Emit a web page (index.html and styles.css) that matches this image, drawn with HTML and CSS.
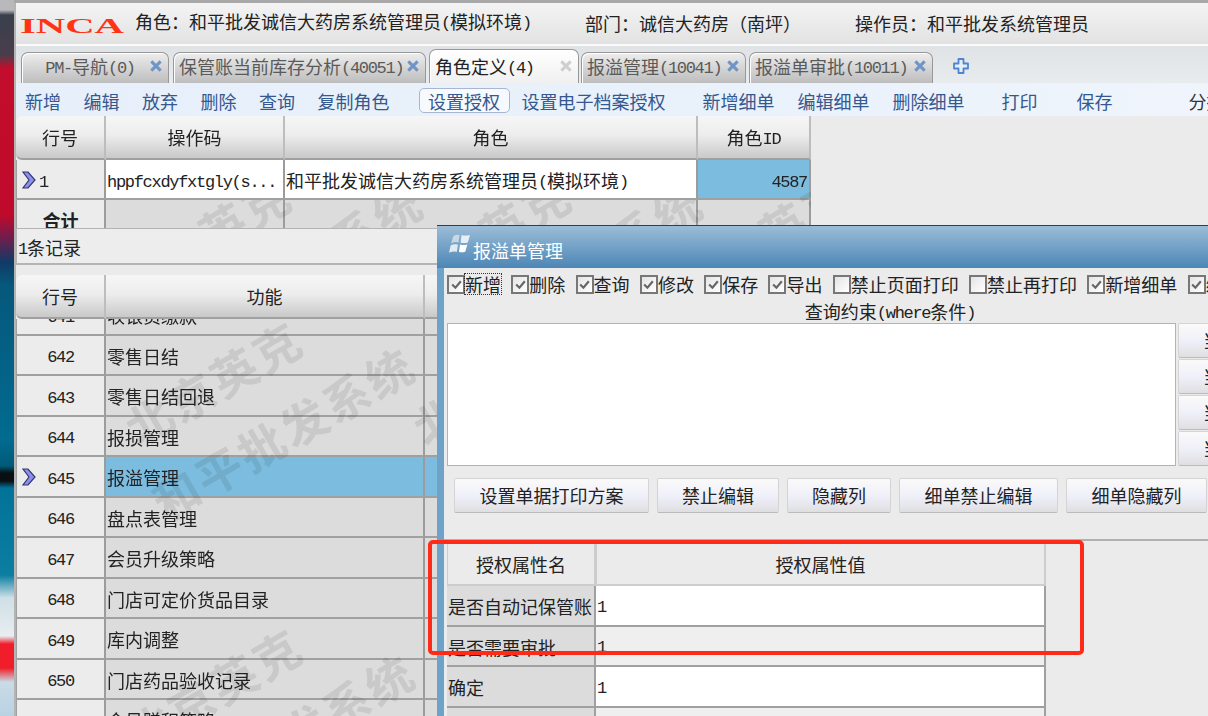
FILE: index.html
```html
<!DOCTYPE html>
<html lang="zh-CN">
<head>
<meta charset="utf-8">
<title>INCA 角色定义</title>
<link rel="stylesheet" href="styles.css">
</head>
<body>
<div class="screen">
  <div class="wall"></div>
  <div class="app">
    <div class="topline"></div>
    <header class="head">
      <div class="logo"><span>INCA</span></div>
      <div class="info info-role">角色<span class="fw">&#xFF1A;</span>和平批发诚信大药房系统管理员<span class="lat">(</span>模拟环境<span class="lat">)</span></div>
      <div class="info info-dept">部门<span class="fw">&#xFF1A;</span>诚信大药房&#xFF08;南坪&#xFF09;</div>
      <div class="info">操作员<span class="fw">&#xFF1A;</span>和平批发系统管理员</div>
    </header>
    <nav class="tabs">
      <div class="tab w1"><span class="tab-label center"><span class="lat">PM-</span>导航<span class="lat">(0)</span></span><svg class="x" viewBox="0 0 12 12"><path d="M2 2l8 8M10 2l-8 8"/></svg></div>
      <div class="tab w2"><span class="tab-label">保管账当前库存分析<span class="lat">(40051)</span></span><svg class="x" viewBox="0 0 12 12"><path d="M2 2l8 8M10 2l-8 8"/></svg></div>
      <div class="tab w3 active"><span class="tab-label">角色定义<span class="lat">(4)</span></span><svg class="x dim" viewBox="0 0 12 12"><path d="M2 2l8 8M10 2l-8 8"/></svg></div>
      <div class="tab w4"><span class="tab-label">报溢管理<span class="lat">(10041)</span></span><svg class="x" viewBox="0 0 12 12"><path d="M2 2l8 8M10 2l-8 8"/></svg></div>
      <div class="tab w5"><span class="tab-label">报溢单审批<span class="lat">(10011)</span></span><svg class="x" viewBox="0 0 12 12"><path d="M2 2l8 8M10 2l-8 8"/></svg></div>
      <svg class="plus" viewBox="0 0 18 18"><path d="M6.5 2h5v4.500h4.500v5h-4.500v4.500h-5v-4.500h-4.500v-5h4.500z" fill="#e6eef9" stroke="#4d86cf" stroke-width="1.800" stroke-linejoin="round"/></svg>
    </nav>
    <div class="toolbar">
      <span class="tool t1">新增</span><span class="tool t1">编辑</span><span class="tool t1">放弃</span><span class="tool t1">删除</span><span class="tool t1">查询</span><span class="tool t2">复制角色</span>
      <span class="tool pill">设置授权</span><span class="tool t3">设置电子档案授权</span>
      <span class="tool t4">新增细单</span><span class="tool t5">编辑细单</span><span class="tool t6">删除细单</span>
      <span class="tool t7">打印</span><span class="tool t8">保存</span><span class="tool t9">分摊</span>
    </div>

    <section class="grid1">
      <div class="hrow">
        <div class="hc c1">行号</div><div class="hc c2">操作码</div><div class="hc c3">角色</div><div class="hc c4"><span>角色<span class="lat">ID</span></span></div>
      </div>
      <div class="g1body">
        <div class="g1row">
          <div class="rh c1"><svg class="arrow" viewBox="0 0 14 18"><path d="M1 1l5 0 7 8-7 8-5 0 6-8z" fill="#8f8ff0" stroke="#33386a" stroke-width="1.2"/></svg><span class="lat">1</span></div>
          <div class="td white c2"><span class="lat">hppfcxdyfxtgly(s...</span></div>
          <div class="td white c3">和平批发诚信大药房系统管理员<span class="lat">(</span>模拟环境<span class="lat">)</span></div>
          <div class="td sel c4 num"><span class="lat">4587</span></div>
        </div>
        <div class="g1row total">
          <div class="rh c1 bold">合计</div><div class="td c2"></div><div class="td c3"></div><div class="td c4"></div>
        </div>
        <span class="wm wm-a1">北京英克</span><span class="wm wm-a2">和平批发系统</span>
        <span class="wm wm-a3">北京英克</span><span class="wm wm-a4">和平批发系统</span>
        <span class="wm wm-a5">北京英克</span>
      </div>
    </section>

    <div class="status"><span class="lat">1</span>条记录</div>

    <section class="grid2">
      <div class="hrow">
        <div class="hc c1">行号</div><div class="hc g2c2">功能</div><div class="hc g2c3"></div>
      </div>
      <div class="g2body">
        <div class="g2row first"><div class="rh c1"><span class="lat">641</span></div><div class="td g2c2">收银员缴款</div><div class="td g2c3"></div></div>
        <div class="g2row"><div class="rh c1"><span class="lat">642</span></div><div class="td g2c2">零售日结</div><div class="td g2c3"></div></div>
        <div class="g2row"><div class="rh c1"><span class="lat">643</span></div><div class="td g2c2">零售日结回退</div><div class="td g2c3"></div></div>
        <div class="g2row"><div class="rh c1"><span class="lat">644</span></div><div class="td g2c2">报损管理</div><div class="td g2c3"></div></div>
        <div class="g2row"><div class="rh c1"><svg class="arrow" viewBox="0 0 14 18"><path d="M1 1l5 0 7 8-7 8-5 0 6-8z" fill="#8f8ff0" stroke="#33386a" stroke-width="1.2"/></svg><span class="lat">645</span></div><div class="td sel g2c2">报溢管理</div><div class="td sel g2c3"></div></div>
        <div class="g2row"><div class="rh c1"><span class="lat">646</span></div><div class="td g2c2">盘点表管理</div><div class="td g2c3"></div></div>
        <div class="g2row"><div class="rh c1"><span class="lat">647</span></div><div class="td g2c2">会员升级策略</div><div class="td g2c3"></div></div>
        <div class="g2row"><div class="rh c1"><span class="lat">648</span></div><div class="td g2c2">门店可定价货品目录</div><div class="td g2c3"></div></div>
        <div class="g2row"><div class="rh c1"><span class="lat">649</span></div><div class="td g2c2">库内调整</div><div class="td g2c3"></div></div>
        <div class="g2row"><div class="rh c1"><span class="lat">650</span></div><div class="td g2c2">门店药品验收记录</div><div class="td g2c3"></div></div>
        <div class="g2row"><div class="rh c1"><span class="lat">651</span></div><div class="td g2c2">会员赠积策略</div><div class="td g2c3"></div></div>
        <span class="wm wm-b1">北京英克</span><span class="wm wm-b2">和平批发系统</span>
        <span class="wm wm-b3">北京英克</span><span class="wm wm-b4">和平批发系统</span>
        <span class="wm wm-b5">北京英克</span>
      </div>
    </section>
  </div>

  <div class="dialog">
    <div class="titlebar">
      <svg class="flag" viewBox="0 0 22 20"><path d="M5 2q3-2 6-1l-1 7q-3-1-7 1z" fill="#c4d8e8"/><path d="M13 1q3 1 8 0l-2 7q-4 1-7 0z" fill="#e6eff6"/><path d="M2.500 11q3-2 7-1l-1 7q-4-1-7.500 1z" fill="#e0ebf3"/><path d="M11.500 10q3 1 7 0l-2 7q-4 1-6 0z" fill="#ffffff"/></svg>
      <span class="dlg-title">报溢单管理</span>
    </div>
    <div class="dlg-body">
      <div class="checks">
        <label class="chk"><span class="box on"><svg viewBox="0 0 12 12"><path d="M2 6l3 3 5-6"/></svg></span><span class="focus">新增</span></label>
        <label class="chk"><span class="box on"><svg viewBox="0 0 12 12"><path d="M2 6l3 3 5-6"/></svg></span>删除</label>
        <label class="chk"><span class="box on"><svg viewBox="0 0 12 12"><path d="M2 6l3 3 5-6"/></svg></span>查询</label>
        <label class="chk"><span class="box on"><svg viewBox="0 0 12 12"><path d="M2 6l3 3 5-6"/></svg></span>修改</label>
        <label class="chk"><span class="box on"><svg viewBox="0 0 12 12"><path d="M2 6l3 3 5-6"/></svg></span>保存</label>
        <label class="chk"><span class="box on"><svg viewBox="0 0 12 12"><path d="M2 6l3 3 5-6"/></svg></span>导出</label>
        <label class="chk"><span class="box"></span>禁止页面打印</label>
        <label class="chk"><span class="box"></span>禁止再打印</label>
        <label class="chk"><span class="box on"><svg viewBox="0 0 12 12"><path d="M2 6l3 3 5-6"/></svg></span>新增细单</label>
        <label class="chk"><span class="box on"><svg viewBox="0 0 12 12"><path d="M2 6l3 3 5-6"/></svg></span>编辑细单</label>
      </div>
      <div class="q-label">查询约束<span class="lat">(where</span>条件<span class="lat">)</span></div>
      <div class="q-row">
        <div class="q-area"></div>
        <div class="q-btns">
          <div class="btn qb">当</div><div class="btn qb">当</div><div class="btn qb">当</div><div class="btn qb">当</div>
        </div>
      </div>
      <div class="btn-row">
        <div class="btn b1">设置单据打印方案</div><div class="btn b2">禁止编辑</div><div class="btn b3">隐藏列</div><div class="btn b4">细单禁止编辑</div><div class="btn b5">细单隐藏列</div>
      </div>
      <div class="divider"></div>
      <div class="attr">
        <div class="attr-head"><div class="ah a1">授权属性名</div><div class="ah a2">授权属性值</div></div>
        <div class="attr-row"><div class="an">是否自动记保管账</div><div class="av white"><span class="lat">1</span></div></div>
        <div class="attr-row"><div class="an">是否需要审批</div><div class="av"><span class="lat">1</span></div></div>
        <div class="attr-row"><div class="an">确定</div><div class="av white"><span class="lat">1</span></div></div>
        <div class="attr-row"><div class="an"></div><div class="av"></div></div>
      </div>
    </div>
  </div>

  <div class="redbox"></div>
</div>
</body>
</html>
```
FILE: styles.css
```css
* { box-sizing: border-box; }
html, body { margin: 0; padding: 0; }
body { width: 1208px; height: 716px; overflow: hidden; font-family: "Noto Sans CJK SC", "Liberation Sans", sans-serif; font-size: 18px; color: #222; background: #ebebeb; }
.lat { font-family: "Liberation Mono", "Noto Sans CJK SC", monospace; font-size: 17px; letter-spacing: -1.3px; position: relative; top: -1px; }
.rh .lat { top: 2px; }
.av .lat { top: 1px; }
.num .lat { top: 2px; }
.fw { font-family: "Noto Sans CJK TC", sans-serif; }
.screen { position: relative; display: flex; width: 1208px; height: 716px; overflow: hidden; }

.wall { flex: 0 0 14px; background: linear-gradient(180deg, #b9b9bc 0, #b9b9bc 10px, #39404c 15px, #4a3d4c 55px, #c30d2c 68px, #c00a2b 215px, #7a1a4a 235px, #113a66 262px, #06587c 285px, #016b90 440px, #015a78 466px, #0a0f14 473px, #0a0f14 481px, #027299 488px, #0b7ea2 575px, #cfe0e6 598px, #e8edf0 636px, #f01e2a 644px, #f01e2a 668px, #c9dbe6 682px, #b9d2e2 716px); }
.app { flex: 1; min-width: 0; display: flex; flex-direction: column; border-left: 2px solid #b4b4b4; height: 716px; }
.topline { height: 3px; background: #a8a8a8; margin-left: -2px; flex: none; }

.head { flex: none; height: 43px; display: flex; align-items: center; background: linear-gradient(180deg, #f4f4f4, #e2e2e2); border-bottom: 2px solid #fafafa; box-shadow: 0 1px 0 #bbb; padding-left: 4px; }
.logo { flex: none; width: 115px; height: 24px; }
.logo span { display: inline-block; font-family: "Liberation Serif", serif; font-weight: 700; font-size: 22px; line-height: 24px; color: #ff3415; transform: scaleX(1.85); transform-origin: left center; }
.info { white-space: nowrap; line-height: 24px; margin-top: -1px; }
.info-role { width: 450px; }
.info-dept { width: 270px; }

.tabs { flex: none; height: 37px; display: flex; align-items: flex-end; background: linear-gradient(180deg, #dfe3e6, #e9ecef); padding-left: 5px; gap: 4px; }
.tab { height: 31px; display: flex; align-items: center; border: 1px solid #989898; border-bottom: 0; border-radius: 7px 7px 0 0; background: linear-gradient(180deg, #ededed, #bdbdbd); color: #5a5a5a; padding: 0 5px 4px; white-space: nowrap; box-shadow: inset 1px 1px 0 #fff; }
.tab-label { flex: 1; min-width: 0; }
.tab-label.center { text-align: center; padding-left: 4px; }
.w1 { width: 148px; }
.w2 { width: 253px; margin-right: -1px; }
.w3 { width: 150px; height: 34px; padding-bottom: 2px; background: linear-gradient(180deg, #ffffff, #f0f0f0); color: #222; margin-right: -2px; }
.w4 { width: 165px; margin-right: -1px; }
.w5 { width: 184px; }
.x { flex: none; width: 14px; height: 14px; fill: none; stroke: #6f95c6; stroke-width: 2.6; }
.x.dim { stroke: #cfcfcf; }
.plus { flex: none; width: 18px; height: 18px; margin: 0 0 8px 15px; }

.toolbar { flex: none; height: 33px; display: flex; align-items: center; padding: 3px 0 0 9px; background: linear-gradient(90deg, #e7effa, #e9f1fb 60%, #f0f5fc); color: #35588f; white-space: nowrap; }
.tool { flex: none; line-height: 24px; }
.t1 { margin-right: 22.500px; }
.t2 { margin-right: 29px; }
.pill { width: 91px; height: 25px; margin-top: -2px; border: 1px solid #a8b6d0; border-radius: 5px; background: #f6f9fd; text-align: center; margin-right: 12px; line-height: 25px; }
.t3 { margin-right: 37px; }
.t4, .t5 { margin-right: 23px; }
.t6 { margin-right: 37px; }
.t7 { margin-right: 39px; }
.t8 { margin-right: 76px; }
.t9 { color: #333; }

.hrow { display: flex; flex: none; height: 44px; position: relative; z-index: 3; }
.hc { flex: none; display: flex; align-items: center; justify-content: center; height: 44px; background: linear-gradient(180deg, #f6f6f6 0, #ededed 45%, #c9c9c9 100%); border-right: 2px solid #bdbdbd; border-bottom: 2px solid #a0a0a0; }
.hc:first-child { border-radius: 6px 0 0 6px; }
.c1 { flex: none; width: 90px; }
.c2 { flex: none; width: 179px; }
.c3 { flex: none; width: 413px; }
.c4 { flex: none; width: 113px; }

.grid1 { flex: none; height: 112px; width: 795px; overflow: hidden; display: flex; flex-direction: column; }
.g1body { position: relative; flex: 1; min-height: 0; background: #dcdcdc; isolation: isolate; }
.g1row { display: flex; height: 40px; position: relative; }
.total { height: 40px; }

.rh { position: relative; z-index: 2; height: 100%; display: flex; align-items: center; justify-content: center; padding-top: 2px; background: #ececec; border-right: 2px solid #9c9c9c; border-bottom: 2px solid #a0a0a0; border-left: 1px solid #a0a0a0; white-space: nowrap; }
.g1row .rh { justify-content: flex-start; padding-left: 22px; }
.g1row .rh.bold { justify-content: center; padding-left: 0; font-weight: 700; }
.td { position: relative; height: 100%; display: flex; align-items: center; padding: 2px 0 0 1px; border-right: 2px solid #9c9c9c; border-bottom: 2px solid #a0a0a0; white-space: pre; }
.td.white { z-index: 2; background: #fff; display: block; line-height: 36px; }
.td.sel { background: #7cbcdf; }
.td.num { justify-content: flex-end; padding-right: 2px; }
.arrow { position: absolute; left: 5px; top: 11px; width: 14px; height: 18px; }

.status { flex: none; height: 37px; line-height: 36px; background: #ededed; border: 1px solid #b4b4b4; border-width: 1px 0 2px 1px; padding-left: 1px; margin-bottom: 10px; }

.grid2 { flex: 1; min-height: 0; display: flex; flex-direction: column; overflow: hidden; }
.g2c2 { flex: none; width: 319px; }
.g2c3 { flex: 1; }
.g2body { position: relative; flex: 1; min-height: 0; overflow: hidden; background: #dcdcdc; isolation: isolate; }
.g2row { display: flex; height: 40.500px; position: relative; }
.g2row.first { margin-top: -24px; }

.wm { position: absolute; z-index: 1; white-space: nowrap; font-size: 46px; font-weight: 700; letter-spacing: 3px; line-height: 50px; color: #e9e9e9; mix-blend-mode: multiply; transform: rotate(-30deg); pointer-events: none; }
.wm-a1 { left: 88px; top: 52px; }
.wm-a2 { left: 128px; top: 84px; }
.wm-a3 { left: 368px; top: 52px; }
.wm-a4 { left: 408px; top: 84px; }
.wm-a5 { left: 648px; top: 52px; }
.wm-b1 { left: 99px; top: 38px; }
.wm-b2 { left: 120px; top: 88px; }
.wm-b3 { left: 99px; top: 345px; }
.wm-b4 { left: 120px; top: 395px; }
.wm-b5 { left: 387px; top: 38px; }

.dialog { position: absolute; left: 437px; top: 225px; width: 899px; height: 520px; z-index: 5; display: flex; flex-direction: column; border-top: 1px solid #24425f; background: #6fa2c9; }
.titlebar { flex: none; height: 42px; display: flex; align-items: center; padding: 2px 0 0 11px; background: linear-gradient(180deg, #9bbcd7, #4c86b6); }
.flag { flex: none; width: 23px; height: 21px; margin: -7px 2px 0 0; }
.dlg-title { color: #fff; line-height: 24px; margin-top: 3px; }
.dlg-body { flex: 1; min-height: 0; margin-left: 7px; background: #ebebeb; display: flex; flex-direction: column; }

.checks { flex: none; display: flex; gap: 10.300px; padding: 6px 0 0 3px; height: 31px; white-space: nowrap; }
.chk { display: flex; align-items: center; height: 20px; line-height: 20px; }
.box { flex: none; width: 18px; height: 19px; border: 2px solid #777; background: linear-gradient(135deg, #e4e4e4, #fff); display: flex; align-items: center; justify-content: center; }
.box svg { width: 13px; height: 13px; fill: none; stroke: #666; stroke-width: 2; }
.focus { outline: 1px dotted #333; }

.q-label { flex: none; height: 24px; line-height: 24px; text-align: center; }
.q-row { flex: none; display: flex; gap: 2px; padding-left: 3px; height: 143px; }
.q-area { flex: none; width: 729px; height: 143px; background: #fff; border: 1px solid #9cb9d0; }
.q-btns { flex: none; width: 120px; display: flex; flex-direction: column; gap: 1px; }
.btn { display: flex; align-items: center; justify-content: center; padding-bottom: 2px; background: linear-gradient(180deg, #fafafa 0, #f0f0fa 50%, #dfdfe2 100%); border: 1px solid #d4d4d4; border-bottom-color: #bbb; border-radius: 2px; white-space: nowrap; }
.qb { flex: 1; justify-content: flex-start; padding-left: 24px; }

.btn-row { flex: none; display: flex; gap: 8px; padding: 12px 0 0 10px; }
.btn-row .btn { height: 35px; flex: none; }
.b1 { width: 195px; }
.b2 { width: 122px; }
.b3 { width: 104px; }
.b4 { width: 159px; }
.b5 { width: 141px; }

.divider { flex: none; height: 2px; background: #b0b0b0; margin-top: 26px; }
.attr { flex: none; width: 600px; margin: 2px 0 0 3px; }
.attr-head { display: flex; height: 43px; }
.ah { display: flex; align-items: center; justify-content: center; background: #ebebeb; border: 1px solid #cdcdcd; border-width: 1px 2px 2px 1px; }
.a1 { width: 149px; }
.a2 { width: 450px; }
.attr-row { display: flex; height: 40.500px; }
.an { width: 149px; background: #dcdcdc; border-bottom: 2px solid #a0a0a0; border-right: 2px solid #a0a0a0; display: flex; align-items: center; padding: 2px 0 0 1px; white-space: nowrap; }
.av { width: 450px; background: #efefef; border-bottom: 2px solid #a0a0a0; border-right: 2px solid #a0a0a0; display: flex; align-items: center; padding: 2px 0 0 1px; }
.av.white { background: #fff; }

.redbox { position: absolute; left: 428px; top: 540px; width: 656px; height: 115px; border: 4px solid #ff2a17; border-radius: 5px; z-index: 6; }
```
